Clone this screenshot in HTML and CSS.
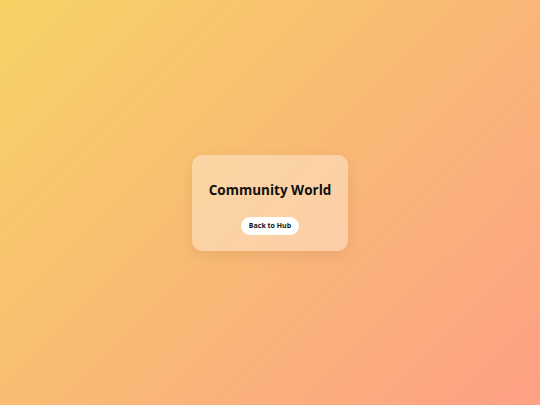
FILE: index.html
```html
<!DOCTYPE html>
<html>
<head>
<meta charset="utf-8">
<link rel="stylesheet" href="styles.css">
</head>
<body>
<main class="page">
  <section class="card">
    <h1 class="title">Community World</h1>
    <button class="btn">Back to Hub</button>
  </section>
</main>
</body>
</html>
```
FILE: styles.css
```css
html, body {
  margin: 0;
  padding: 0;
  height: 100%;
}
body {
  font-family: "Open Sans", "Noto Sans", sans-serif;
  background: linear-gradient(135deg, #f6d365 0%, #fda085 100%);
}
.page {
  height: 100%;
  display: flex;
  align-items: center;
  justify-content: center;
}
.card {
  display: flex;
  flex-direction: column;
  align-items: center;
  width: 156px;
  box-sizing: border-box;
  padding: 26px 0 16px;
  border-radius: 10px;
  background: rgba(255, 255, 255, 0.35);
  box-shadow: 0 4px 14px rgba(0, 0, 0, 0.08);
}
.title {
  margin: 0 0 17px;
  font-size: 13.5px;
  line-height: 19px;
  font-weight: 700;
  color: #111;
  white-space: nowrap;
}
.btn {
  font-family: inherit;
  font-size: 7px;
  font-weight: 700;
  color: #111;
  background: #fff;
  border: none;
  border-radius: 9px;
  height: 18px;
  width: 58px;
  padding: 0;
  cursor: pointer;
}
```
